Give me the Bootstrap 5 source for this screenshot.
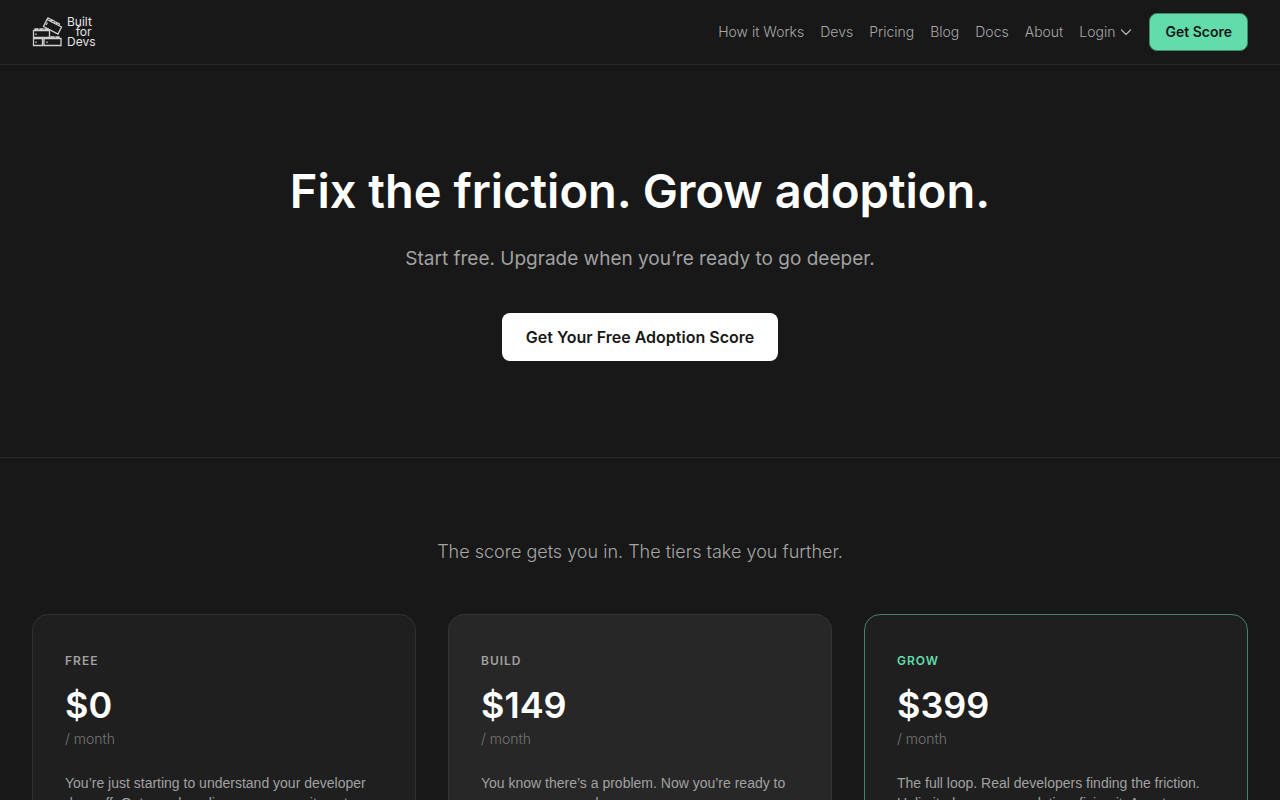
<!DOCTYPE html>
<html lang="en">
<head>
<meta charset="utf-8">
<meta name="viewport" content="width=device-width, initial-scale=1">
<title>Pricing – Built for Devs</title>
<link href="https://cdn.jsdelivr.net/npm/bootstrap@5.3.0/dist/css/bootstrap.min.css" rel="stylesheet">
<style>
body { background: #181818; color: #fff; font-family: Inter, "Liberation Sans", sans-serif; }
.site-bar { border-bottom: 1px solid #282828; padding: 13px 32px; }
.site-bar .nav-link { color: #a8a8a8; font-size: 14px; font-weight: 300; line-height: 20px; padding: 0; }
.site-bar .nav-link:hover { color: #fff; }
.brand-words { color: #e4e4e4; font-size: 12px; line-height: 10px; }
.btn-score { background: #61dcaa; color: #181818; font-size: 14px; font-weight: 600; line-height: 20px; padding: 8px 15px; border: 1px solid #3f8a6c; border-radius: 8px; }
.btn-score:hover { background: #7ee6bd; }
.hero { padding: 96px 32px; border-bottom: 1px solid #282828; }
.hero h1 { font-size: 47px; font-weight: 600; line-height: 60px; margin-bottom: 24px; }
.hero p { color: #a1a1a1; font-size: 19px; line-height: 28px; margin-bottom: 40px; }
.btn-hero { background: #fff; color: #181818; font-size: 16px; font-weight: 600; line-height: 24px; padding: 12px 24px; border: 0; border-radius: 8px; }
.btn-hero:hover { background: #e4e4e4; }
.tiers { padding: 80px 32px; }
.tiers-intro { color: #a6a6a6; font-size: 18px; font-weight: 300; line-height: 28px; margin-bottom: 48px; }
.tier { background: #1f1f1f; border: 1px solid #313131; border-radius: 16px; padding: 32px; }
.tier-build { background: #272727; border-color: #353535; }
.tier-grow { border-color: #42806a; }
.tier h2 { color: #a1a1a1; font-size: 12px; font-weight: 600; line-height: 20px; letter-spacing: 1px; margin: 4px 0 16px; }
.tier-grow h2 { color: #61dcaa; }
.price { font-size: 36px; font-weight: 600; line-height: 36px; margin-bottom: 6px; }
.period { color: #757575; font-size: 14px; font-weight: 300; line-height: 20px; margin-bottom: 24px; }
.pitch { color: #a1a1a1; font-family: "Liberation Sans", Arial, sans-serif; font-size: 14px; line-height: 20px; }
</style>
</head>
<body>
<header class="site-bar d-flex align-items-center justify-content-between">
  <a href="#" class="d-flex align-items-center text-decoration-none" aria-label="Built for Devs">
    <svg width="31" height="32" viewBox="0 0 31 32" fill="none" stroke="#cfcfcf" stroke-width="1.3" aria-hidden="true">
      <path d="M1.500 14.500H17.500V21.500H1.500ZM1.500 22.500H10.500V29.500H1.500ZM12 22.500H29V29.500H12ZM3 14V13H6V14M8 14V13H11V14M13 14V13H16V14M19 22V21H22V22M24 22V21H27V22"/>
      <path d="M15 3.500 29.500 11 26 18 11.500 10.500ZM15.500 3.500 16 2 19 3.500 18.500 5M19.500 5.500 20 4 23 5.500 22.500 7M24 8 24.500 6.500 27.500 8 27 9.500M15.500 6.500 14 9M4 17.500V19M4 25.500V27M15 25.500V27"/>
    </svg>
    <span class="brand-words d-grid ms-1"><span>Built</span><span class="text-end pe-1">for</span><span>Devs</span></span>
  </a>
  <nav class="d-flex align-items-center gap-3">
    <a class="nav-link" href="#">How it Works</a>
    <a class="nav-link" href="#">Devs</a>
    <a class="nav-link" href="#">Pricing</a>
    <a class="nav-link" href="#">Blog</a>
    <a class="nav-link" href="#">Docs</a>
    <a class="nav-link" href="#">About</a>
    <button type="button" class="nav-link border-0 bg-transparent d-flex align-items-center gap-1">Login
      <svg width="14" height="14" viewBox="0 0 14 14" fill="none" stroke="currentColor" stroke-width="1.4" stroke-linecap="round" stroke-linejoin="round" aria-hidden="true"><path d="m2.500 5 4.500 4.500L11.500 5"/></svg>
    </button>
    <button type="button" class="btn btn-score">Get Score</button>
  </nav>
</header>
<main>
  <section class="hero text-center">
    <h1>Fix the friction. Grow adoption.</h1>
    <p>Start free. Upgrade when you’re ready to go deeper.</p>
    <button type="button" class="btn btn-hero">Get Your Free Adoption Score</button>
  </section>
  <section class="tiers">
    <p class="tiers-intro text-center">The score gets you in. The tiers take you further.</p>
    <div class="row row-cols-1 row-cols-md-3" style="--bs-gutter-x: 32px; --bs-gutter-y: 32px">
      <div class="col">
        <article class="tier h-100">
          <h2>FREE</h2>
          <div class="price">$0</div>
          <div class="period">/ month</div>
          <p class="pitch mb-0">You’re just starting to understand your developer drop-off. Get your baseline — no commitment.</p>
        </article>
      </div>
      <div class="col">
        <article class="tier tier-build h-100">
          <h2>BUILD</h2>
          <div class="price">$149</div>
          <div class="period">/ month</div>
          <p class="pitch mb-0">You know there’s a problem. Now you’re ready to measure more and</p>
        </article>
      </div>
      <div class="col">
        <article class="tier tier-grow h-100">
          <h2>GROW</h2>
          <div class="price">$399</div>
          <div class="period">/ month</div>
          <p class="pitch mb-0">The full loop. Real developers finding the friction. Unlimited scores, escalation, fixing it. Agent</p>
        </article>
      </div>
    </div>
  </section>
</main>
<script src="https://cdn.jsdelivr.net/npm/bootstrap@5.3.0/dist/js/bootstrap.bundle.min.js"></script>
</body>
</html>
